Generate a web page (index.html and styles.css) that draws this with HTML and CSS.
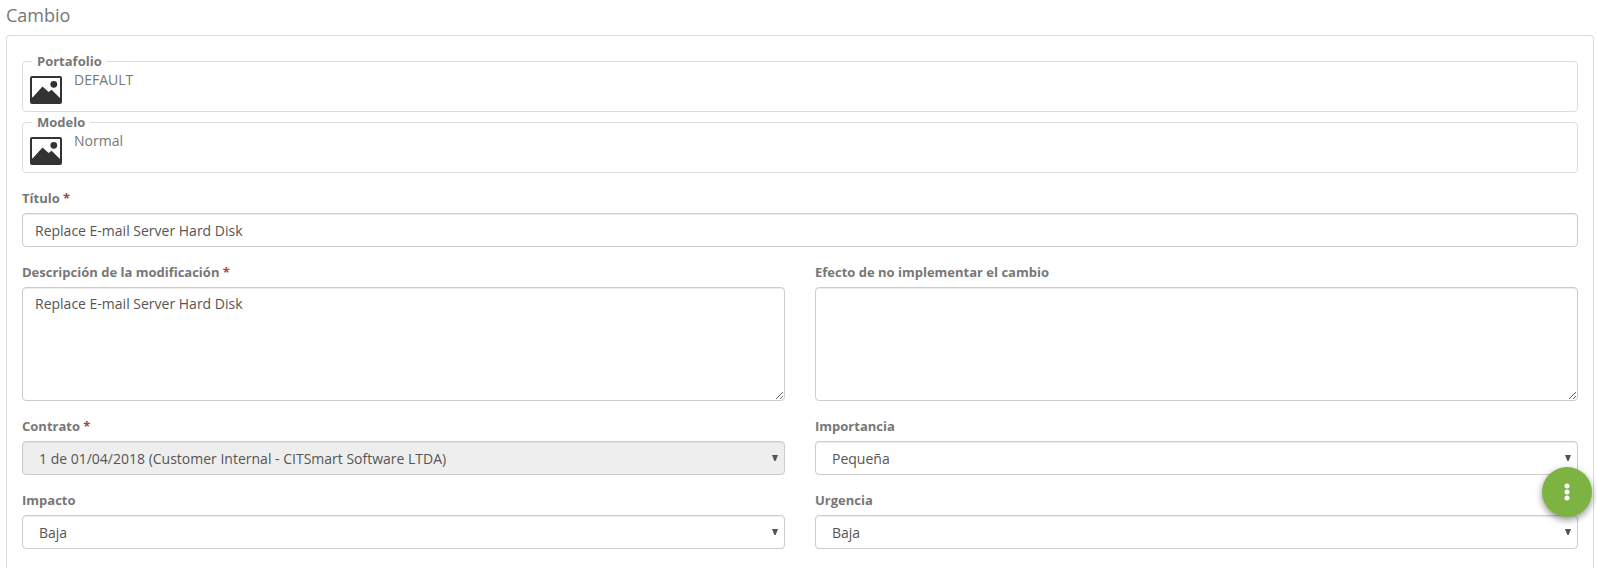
FILE: index.html
```html
<!DOCTYPE html>
<html lang="es">
<head>
<meta charset="utf-8">
<title>Cambio</title>
<link rel="stylesheet" href="styles.css">
</head>
<body>
<svg class="symbols" aria-hidden="true">
  <symbol id="picture" viewBox="0 0 32 28">
    <rect x="1" y="1" width="30" height="26" rx="1" fill="none" stroke="#333" stroke-width="2"/>
    <circle cx="23.8" cy="8.3" r="3.4" fill="#333"/>
    <path d="M1 27V22L3 21L12.5 10.5L18.6 16L21.6 13.8L29.5 21.5L31 23V27Z" fill="#333"/>
  </symbol>
  <symbol id="arrow" viewBox="0 0 6 6"><path d="M0 0H6L3.6 6H2.4Z" fill="#555"/></symbol>
</svg>
<h1 class="title">Cambio</h1>
<main class="panel">
  <fieldset class="summary">
    <legend>Portafolio</legend>
    <div class="summary-body"><svg class="picture"><use href="#picture"/></svg><span>DEFAULT</span></div>
  </fieldset>
  <fieldset class="summary">
    <legend>Modelo</legend>
    <div class="summary-body"><svg class="picture"><use href="#picture"/></svg><span>Normal</span></div>
  </fieldset>
  <form class="grid">
    <div class="field wide">
      <label for="titulo">Título <span class="req">*</span></label>
      <input class="control" id="titulo" type="text" value="Replace E-mail Server Hard Disk">
    </div>
    <div class="field">
      <label for="descripcion">Descripción de la modificación <span class="req">*</span></label>
      <textarea class="control area" id="descripcion" spellcheck="false">Replace E-mail Server Hard Disk</textarea>
    </div>
    <div class="field">
      <label for="efecto">Efecto de no implementar el cambio</label>
      <textarea class="control area" id="efecto"></textarea>
    </div>
    <div class="field">
      <label for="contrato">Contrato <span class="req">*</span></label>
      <div class="select"><select class="control" id="contrato" disabled><option>1 de 01/04/2018 (Customer Internal - CITSmart Software LTDA)</option></select><svg class="arrow"><use href="#arrow"/></svg></div>
    </div>
    <div class="field">
      <label for="importancia">Importancia</label>
      <div class="select"><select class="control" id="importancia"><option>Pequeña</option></select><svg class="arrow"><use href="#arrow"/></svg></div>
    </div>
    <div class="field">
      <label for="impacto">Impacto</label>
      <div class="select"><select class="control" id="impacto"><option>Baja</option></select><svg class="arrow"><use href="#arrow"/></svg></div>
    </div>
    <div class="field">
      <label for="urgencia">Urgencia</label>
      <div class="select"><select class="control" id="urgencia"><option>Baja</option></select><svg class="arrow"><use href="#arrow"/></svg></div>
    </div>
  </form>
</main>
<button class="fab" type="button" aria-label="Acciones">
  <svg width="6" height="18" viewBox="0 0 6 18" fill="#fff"><circle cx="3" cy="3" r="2.5"/><circle cx="3" cy="9" r="2.5"/><circle cx="3" cy="15" r="2.5"/></svg>
</button>
</body>
</html>
```
FILE: styles.css
```css
* { box-sizing: border-box; }
html { height: 100%; }
body {
  display: flex;
  flex-direction: column;
  margin: 0;
  padding: 0 3px 0 6px;
  height: 100%;
  background: #fff;
  color: #777;
  font: 14px/20px "Open Sans", sans-serif;
}
.symbols { position: absolute; width: 0; height: 0; }
.title { margin: 0; padding: 5px 0 10px; font-size: 18px; line-height: 20px; font-weight: 400; }
.panel { flex: 1; padding: 15px 15px 0; border: 1px solid #ddd; border-bottom: 0; border-radius: 4px 4px 0 0; }
.summary {
  min-width: 0;
  height: 61px;
  margin: 0;
  padding: 0 7px;
  border: 1px solid #ddd;
  border-radius: 4px;
}
.summary legend { margin-left: 2px; padding: 0 5px; font-size: 13px; font-weight: 700; line-height: 20px; }
.summary-body { display: flex; gap: 12px; margin-top: -1px; }
.picture { width: 32px; height: 28px; margin-top: 6px; }
.grid { display: grid; grid-template-columns: 1fr 1fr; gap: 15px 30px; margin-top: 15px; }
.field { display: flex; flex-direction: column; gap: 5px; }
.wide { grid-column: 1 / -1; }
.field label { font-size: 13px; font-weight: 700; line-height: 20px; }
.req { color: #a94442; }
.control {
  display: block;
  width: 100%;
  height: 34px;
  margin: 0;
  padding: 6px 12px;
  border: 1px solid #ccc;
  border-radius: 4px;
  background: #fff;
  box-shadow: inset 0 1px 1px rgba(0, 0, 0, .075);
  color: #555;
  font: 14px/20px "Open Sans", sans-serif;
}
.area { height: 114px; resize: both; }
.select { position: relative; }
select.control { appearance: none; padding: 7px 16px 5px; opacity: 1; }
select.control:disabled { background: #eee; }
.arrow { position: absolute; right: 7px; top: 14px; width: 6px; height: 6px; }
.fab {
  position: fixed;
  left: 1542px;
  top: 467px;
  display: grid;
  place-items: center;
  width: 50px;
  height: 50px;
  padding: 0;
  border: 0;
  border-radius: 50%;
  background: #7cb342;
  box-shadow: 0 3px 6px rgba(0, 0, 0, .3), 0 2px 10px rgba(0, 0, 0, .16);
}
```
